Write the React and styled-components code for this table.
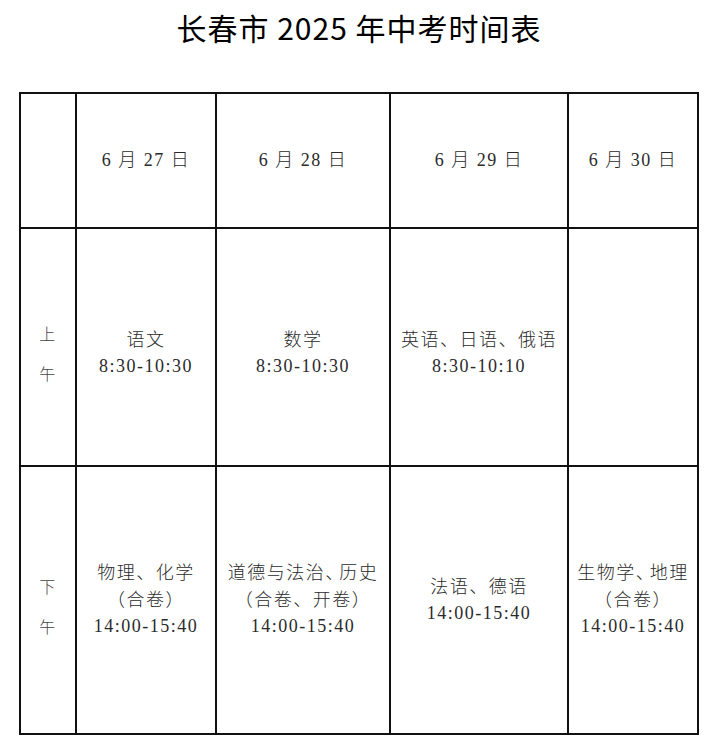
import React from 'react'
import styled, { createGlobalStyle } from 'styled-components'

const GlobalStyle = createGlobalStyle`
  html, body {
    margin: 0;
    padding: 0;
    background: #fff;
  }
`

const Page = styled.div`
  width: 720px;
  height: 745px;
  padding: 0 0 0 19px;
  box-sizing: border-box;
  background: #fff;
`

const Title = styled.h1`
  margin: 0;
  padding: 8px 0 0 0;
  height: 92px;
  box-sizing: border-box;
  width: 680px;
  text-align: center;
  font-family: "Noto Sans CJK SC", "Noto Sans", sans-serif;
  font-size: 30px;
  font-weight: 400;
  line-height: 38px;
  color: #000;
  letter-spacing: 1px;
`

const Table = styled.table`
  border-collapse: collapse;
  table-layout: fixed;
  width: 678px;
  margin-top: 0;
`

const Row = styled.tr`
  height: ${({ $h }) => $h}px;
`

const Cell = styled.td`
  border: 2px solid #111;
  padding: ${({ $shift }) => ($shift ? `${$shift}px 0 0 0` : '0')};
  text-align: center;
  vertical-align: middle;
  font-family: "Liberation Serif", "Noto Sans CJK SC", serif;
  font-size: 18px;
  font-weight: 300;
  letter-spacing: 1.5px;
  line-height: 26.5px;
  color: #2a2a2a;
  white-space: nowrap;
`

const Session = styled.div`
  display: flex;
  flex-direction: column;
  align-items: center;
  gap: 13px;
  font-size: 16px;
  color: #444;
`

const Tight = styled.span`
  letter-spacing: -4px;
`

const dates = ['6 月 27 日', '6 月 28 日', '6 月 29 日', '6 月 30 日']

export default function App() {
  return (
    <>
      <GlobalStyle />
      <Page>
        <Title>长春市 2025 年中考时间表</Title>
        <Table>
          <colgroup>
            <col style={{ width: 56 }} />
            <col style={{ width: 140 }} />
            <col style={{ width: 174 }} />
            <col style={{ width: 178 }} />
            <col style={{ width: 130 }} />
          </colgroup>
          <tbody>
            <Row $h={135}>
              <Cell />
              {dates.map((d) => (
                <Cell key={d}>{d}</Cell>
              ))}
            </Row>
            <Row $h={238}>
              <Cell $shift={16}>
                <Session>
                  <span>上</span>
                  <span>午</span>
                </Session>
              </Cell>
              <Cell $shift={12}>语文<br />8:30-10:30</Cell>
              <Cell $shift={12}>数学<br />8:30-10:30</Cell>
              <Cell $shift={12}>英语、日语、俄语<br />8:30-10:10</Cell>
              <Cell />
            </Row>
            <Row $h={268}>
              <Cell $shift={16}>
                <Session>
                  <span>下</span>
                  <span>午</span>
                </Session>
              </Cell>
              <Cell>物理、化学<br />（合卷）<br />14:00-15:40</Cell>
              <Cell>道德与法治<Tight>、</Tight>历史<br />（合卷、开卷）<br />14:00-15:40</Cell>
              <Cell>法语、德语<br />14:00-15:40</Cell>
              <Cell>生物学<Tight>、</Tight>地理<br />（合卷）<br />14:00-15:40</Cell>
            </Row>
          </tbody>
        </Table>
      </Page>
    </>
  )
}
